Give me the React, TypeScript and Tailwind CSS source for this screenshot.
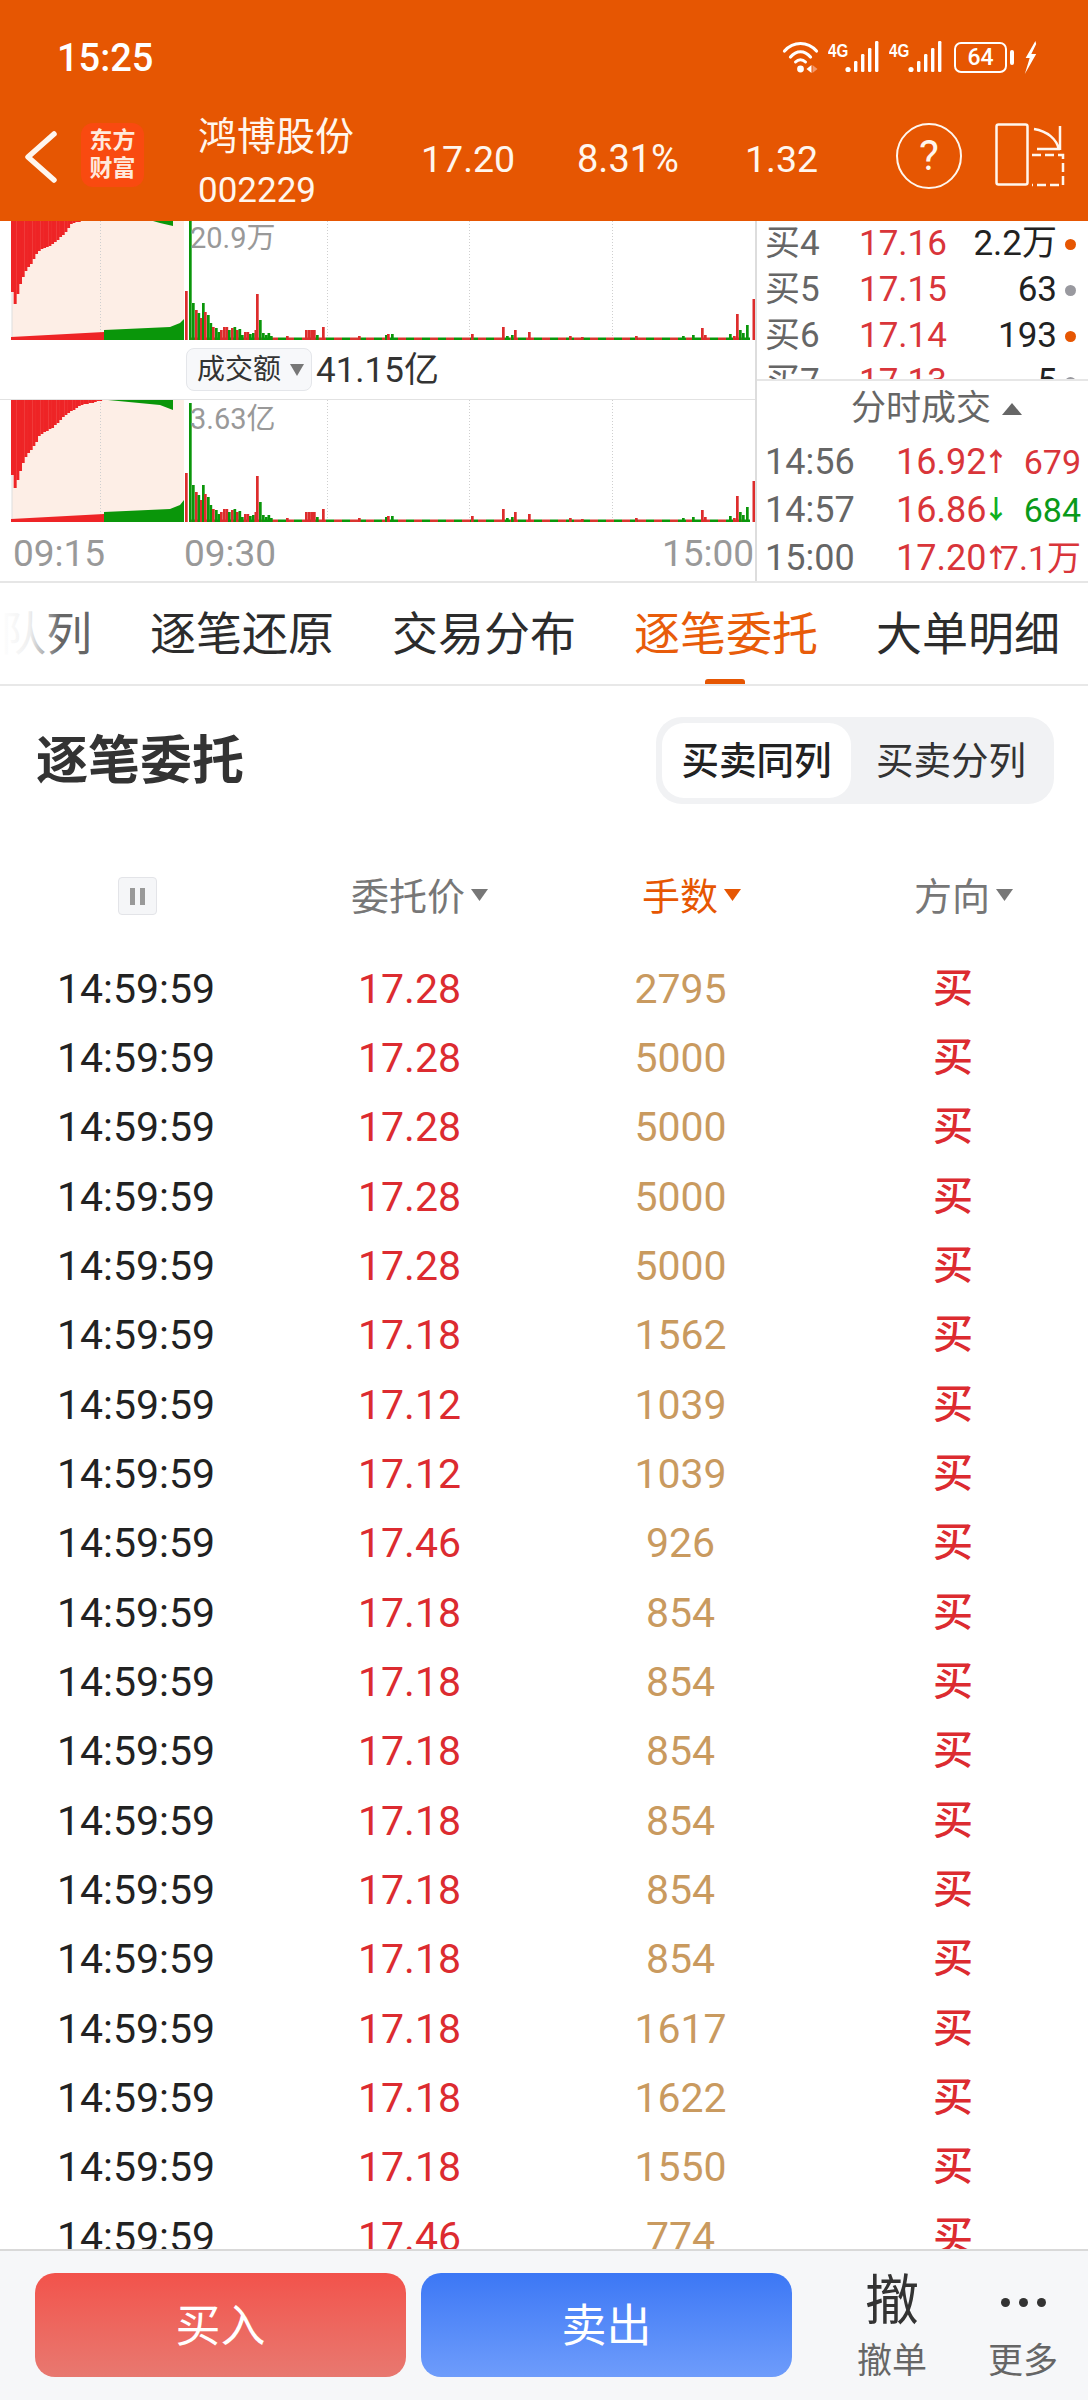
import React from "react";

const FONT = 'Roboto, "Noto Sans CJK SC", sans-serif';
const R = "#ee2426";
const G = "#0a960a";

const rows: [string, string][] = [
  ["17.28", "2795"], ["17.28", "5000"], ["17.28", "5000"], ["17.28", "5000"], ["17.28", "5000"],
  ["17.18", "1562"], ["17.12", "1039"], ["17.12", "1039"], ["17.46", "926"], ["17.18", "854"],
  ["17.18", "854"], ["17.18", "854"], ["17.18", "854"], ["17.18", "854"], ["17.18", "854"],
  ["17.18", "1617"], ["17.18", "1622"], ["17.18", "1550"], ["17.46", "774"],
];

const bars: [number, number, number][] = [
  [185, 49, 1], [189, 119, 0], [192, 37, 0], [195, 30, 1], [197.5, 27, 0], [200, 22, 1], [202, 37, 0],
  [204, 28, 1], [207, 25, 0], [209.5, 17, 0], [212, 13, 1], [215, 12, 0], [217.5, 8, 0], [220, 10, 1],
  [223, 13, 1], [225.5, 13, 1], [228, 10, 0], [231, 12, 1], [233.5, 13, 0], [236, 10, 1], [238.5, 11, 0],
  [241, 5, 0], [244, 8, 1], [246.5, 8, 1], [249, 6, 0], [252, 7, 0], [254.5, 10, 1], [256, 46, 1],
  [259, 20, 0], [262, 7, 0], [265, 5, 0], [267.5, 7, 0], [270, 4, 0], [286, 4, 1], [305, 10, 1], [308, 10, 1],
  [310.5, 10, 1], [313, 10, 1], [316, 5, 0], [322, 13, 1], [358, 4, 1], [385, 5, 0], [387, 6, 1], [391, 6, 0],
  [471, 6, 1], [502, 13, 1], [506, 4, 0], [511, 5, 0], [514, 10, 1], [528, 8, 1], [569, 4, 1], [581, 3, 1],
  [635, 4, 1], [682, 4, 0], [692, 5, 0], [701, 12, 1], [704, 5, 1], [729, 6, 0], [733, 4, 1], [736, 26, 1],
  [739, 10, 0], [742, 7, 0], [746, 15, 0], [752.5, 41, 1],
];

// red block's lower edge, sampled into thin columns so it steps like the reference
function columns(pts: [number, number][]) {
  const out: [number, number][] = [];
  const end = pts[pts.length - 1][0];
  for (let x = 11; x < end; x += 2.67) {
    let y = 0;
    for (let i = 0; i < pts.length - 1; i++) {
      if (x >= pts[i][0] && x < pts[i + 1][0]) {
        const t = (x - pts[i][0]) / (pts[i + 1][0] - pts[i][0]);
        y = pts[i][1] + (pts[i + 1][1] - pts[i][1]) * t;
      }
    }
    out.push([x, Math.round(y)]);
  }
  return out;
}

function Chart({ h, red, greenTop, redBase, greenBase }: { h: number; red: [number, number][]; greenTop: string; redBase: string; greenBase: string }) {
  const noise = Array.from({ length: 70 }, (_, i) => i);
  return (
    <svg width="755" height={h} viewBox={`0 0 755 ${h}`} className="block">
      <rect x="12" y="0" width="172" height={h} fill="#fdeee6" />
      <line x1="12" y1="0" x2="12" y2={h} stroke="#dddddd" strokeWidth="1" />
      {[100, 327, 469, 612].map((x) => (
        <line key={x} x1={x + 0.5} y1="0" x2={x + 0.5} y2={h} stroke="#cfcfcf" strokeWidth="1" strokeDasharray="1 2" />
      ))}
      {columns(red).map(([x, y]) => (
        <rect key={x} x={x} y="0" width="3" height={y} fill={R} />
      ))}
      <polygon points={greenTop} fill={G} />
      <polygon points={redBase} fill={R} />
      <polygon points={greenBase} fill={G} />
      {noise.map((i) => (
        <rect key={i} x={190 + i * 8} y={h - 2.5} width="8" height="2.5" fill={i % 2 ? G : "#d8362f"} />
      ))}
      {bars.map(([x, v, c], i) => (
        <rect key={i} x={x} y={Math.max(h - v, 0)} width="2.7" height={Math.min(v, h)} fill={c ? "#dd2c2c" : G} />
      ))}
    </svg>
  );
}

const Tri = ({ color, up, w = 17, hh = 12 }: { color: string; up?: boolean; w?: number; hh?: number }) => (
  <svg width={w} height={hh} viewBox="0 0 17 12" preserveAspectRatio="none" className="block">
    <polygon points={up ? "8.5,0 17,12 0,12" : "0,0 17,0 8.5,12"} fill={color} />
  </svg>
);

function Signal({ w }: { w: number }) {
  return (
    <div className="flex items-start">
      <span className="block text-[19px] leading-[18px] font-bold text-white mt-[1px] [font-family:'Liberation_Sans',sans-serif] origin-left scale-x-[0.8]" style={{ width: w }}>4G</span>
      <svg width="34" height="32" viewBox="0 0 34 32" className="block">
        <circle cx="3" cy="28.5" r="2.6" fill="#fff" />
        <rect x="9" y="20" width="3.4" height="11" rx="1.2" fill="#fff" />
        <rect x="16" y="13" width="3.4" height="18" rx="1.2" fill="#fff" />
        <rect x="23" y="7" width="3.4" height="24" rx="1.2" fill="#fff" />
        <rect x="30" y="0" width="3.4" height="31" rx="1.2" fill="#fff" />
      </svg>
    </div>
  );
}

function Book({ n, p, v, hot }: { n: string; p: string; v: string; hot: boolean }) {
  return (
    <div className="h-[46px] flex items-center text-[35px] leading-[46px] shrink-0 whitespace-nowrap">
      <span className="w-[102px] pl-[8px] text-[#666666]">{n}</span>
      <span className="w-[90px] text-[#d9353a]">{p}</span>
      <span className="w-[108px] text-right text-[#222222]">{v}</span>
      <span className="w-[8px]" />
      <span className={`w-[11px] h-[11px] rounded-full ${hot ? "bg-[#e65602]" : "bg-[#99999f]"}`} />
    </div>
  );
}

function Tick({ t, p, a, v, up }: { t: string; p: string; a: string; v: string; up: boolean }) {
  return (
    <div className="h-[48.5px] flex items-center text-[36px] leading-[48px] whitespace-nowrap">
      <span className="w-[139px] pl-[8px] text-[#666666]">{t}</span>
      <span className="w-[87px] text-[#d9353a]">{p}</span>
      <span className={`w-[15px] text-center text-[26px] font-bold ${up ? "text-[#d9353a]" : "text-[#0fb01f]"}`}>{a}</span>
      <span className={`w-[83px] text-right text-[34px] ${up ? "text-[#d9353a]" : "text-[#0a9a1a]"}`}>{v}</span>
    </div>
  );
}

export default function App() {
  return (
    <div className="w-[1088px] h-[2400px] bg-white flex flex-col overflow-hidden" style={{ fontFamily: FONT }}>
      {/* header */}
      <div className="h-[221px] shrink-0 bg-[#e65602] text-[#fff6ee] flex flex-col">
        <div className="h-[110px] flex items-start pt-[36px] pl-[57px] pr-[51px] justify-between">
          <span className="text-[38px] leading-[44px] font-medium text-white">15:25</span>
          <div className="flex items-start mt-[5px]">
            <svg width="37" height="32" viewBox="0 0 36 32" className="block">
              <path d="M2 10 C11 0 25 0 34 10" stroke="#fff" strokeWidth="3.2" fill="none" strokeLinecap="round" />
              <path d="M8 16 C14 9 22 9 28 16" stroke="#fff" strokeWidth="3.2" fill="none" strokeLinecap="round" />
              <path d="M13 21 C16 18 20 18 23 21" stroke="#fff" strokeWidth="3" fill="none" strokeLinecap="round" />
              <circle cx="18" cy="28" r="3.4" fill="#fff" />
              <polygon points="29,24 24,28 29,32" fill="#fff" />
              <polygon points="30,24 35,28 30,32" fill="#f3966a" />
            </svg>
            <div className="ml-[9px]"><Signal w={17} /></div>
            <div className="ml-[10px]"><Signal w={19} /></div>
            <div className="ml-[12px] mt-[1px] w-[53px] h-[31px] border-[2.5px] border-white rounded-[7px] flex items-center justify-center text-[23px] leading-[24px] font-medium text-white">64</div>
            <div className="w-[4px] h-[15px] ml-[3px] mt-[9px] bg-white rounded-[2px]" />
            <svg width="13" height="33" viewBox="0 0 16 33" preserveAspectRatio="none" className="block ml-[10px]">
              <polygon points="14,0 2,17 7,17 1,33 15,13 9,13 15,3" fill="#fff" />
            </svg>
          </div>
        </div>
        <div className="flex-1 flex items-start">
          <svg width="81" height="80" viewBox="0 0 81 80" className="block shrink-0 mt-[2px]">
            <path d="M54 22 L28 45 L54 68" stroke="#fff6ee" strokeWidth="5.5" fill="none" strokeLinecap="round" strokeLinejoin="round" />
          </svg>
          <div className="w-[63px] h-[64px] shrink-0 mt-[13px] rounded-[12px] bg-[#f94a10] flex items-center justify-center text-center text-[23px] leading-[28px] font-bold text-[#ffe9dc]">东方<br />财富</div>
          <div className="w-[223px] ml-[54px] shrink-0 mt-[2px]">
            <div className="text-[39px] leading-[50px]">鸿博股份</div>
            <div className="text-[35px] leading-[42px] mt-[8px]">002229</div>
          </div>
          <div className="w-[156px] text-[37.5px] leading-[44px] mt-[27px] shrink-0">17.20</div>
          <div className="w-[168px] text-[38px] leading-[44px] mt-[27px] shrink-0">8.31%</div>
          <div className="w-[151px] text-[37.5px] leading-[44px] mt-[27px] shrink-0">1.32</div>
          <div className="w-[66px] h-[66px] mt-[13px] shrink-0 rounded-full border-[2.5px] border-[#fff6ee] flex items-center justify-center text-[42px] leading-[50px]">?</div>
          <svg width="70" height="66" viewBox="0 0 70 66" className="block ml-[33px] mt-[13px] shrink-0">
            <rect x="1.5" y="1.5" width="31" height="60" rx="2" stroke="#fff6ee" strokeWidth="2.5" fill="none" />
            <path d="M39 6 C52 8 62 16 64 27 M65 3 V27 M42 26 H65" stroke="#fff6ee" strokeWidth="2.5" fill="none" />
            <path d="M37 32 H68 V62 H37" stroke="#fff6ee" strokeWidth="2.5" fill="none" strokeDasharray="9 4" />
          </svg>
        </div>
      </div>

      {/* chart area */}
      <div className="h-[362px] shrink-0 flex border-b-[2px] border-[#e6e6e6]">
        <div className="w-[755px] shrink-0">
          <div className="relative h-[119px]">
            <Chart
              h={119}
              red={[[11, 71], [13, 85], [16, 74], [20, 60], [24, 50], [30, 43], [33, 37], [37, 30], [50, 24], [63, 13], [70, 3], [80, 0]]}
              greenTop="153,0 173,0 173,5 160,2"
              redBase="11,119 11,116 104,111 104,119"
              greenBase="104,109 170,106 180,102 184,98 184,119 104,119"
            />
            <span className="absolute left-[190px] top-[-1px] text-[29px] leading-[36px] text-[#999999]">20.9万</span>
          </div>
          <div className="h-[60px] flex items-center pl-[186px] border-b border-[#e2e2e2]">
            <div className="w-[126px] h-[43px] rounded-[8px] border border-[#e4e6ea] bg-[#f7f8fa] flex items-center pl-[10px] text-[28px] leading-[40px] text-[#333333]">
              <span>成交额</span>
              <svg width="14" height="12" viewBox="0 0 14 12" className="block ml-[9px]"><polygon points="0,0 14,0 7,12" fill="#777777" /></svg>
            </div>
            <span className="ml-[4px] mt-[3px] text-[35px] leading-[44px] text-[#333333]">41.15亿</span>
          </div>
          <div className="relative h-[122px]">
            <Chart
              h={122}
              red={[[11, 75], [13, 90], [17, 78], [21, 65], [24, 57], [28, 52], [35, 42], [38, 35], [52, 27], [65, 14], [80, 5], [103, 0]]}
              greenTop="108,0 173,0 173,10 160,5"
              redBase="11,122 11,119 104,114 104,122"
              greenBase="104,112 170,109 180,105 184,100 184,122 104,122"
            />
            <span className="absolute left-[190px] top-[1px] text-[29px] leading-[36px] text-[#999999]">3.63亿</span>
          </div>
          <div className="flex h-[59px] items-center pt-[5px] text-[37px] leading-[44px] text-[#999999] pl-[13px]">
            <span className="w-[171px]">09:15</span>
            <span className="w-[478px]">09:30</span>
            <span>15:00</span>
          </div>
        </div>
        <div className="w-[333px] border-l-[2px] border-[#dddddd] flex flex-col">
          <div className="h-[160px] overflow-hidden border-b-[2px] border-[#e6e6e6] shrink-0 flex flex-col">
            <Book n="买4" p="17.16" v="2.2万" hot />
            <Book n="买5" p="17.15" v="63" hot={false} />
            <Book n="买6" p="17.14" v="193" hot />
            <Book n="买7" p="17.13" v="5" hot={false} />
          </div>
          <div className="h-[55px] flex items-center justify-center gap-[11px] text-[35px] leading-[44px] text-[#666666] pl-[28px] shrink-0">
            <span>分时成交</span>
            <Tri color="#666666" up w={20} hh={12} />
          </div>
          <div className="mt-[2px]" />
          <Tick t="14:56" p="16.92" a="↑" v="679" up />
          <Tick t="14:57" p="16.86" a="↓" v="684" up={false} />
          <Tick t="15:00" p="17.20" a="↑" v="7.1万" up />
        </div>
      </div>

      {/* tabs */}
      <div className="h-[103px] shrink-0 relative border-b-[2px] border-[#e8e8e8] overflow-hidden flex gap-[58px] pt-[21px] text-[46px] leading-[60px] text-[#2c2c2c]">
        <span className="text-[#666666]">队列</span>
        <span>逐笔还原</span>
        <span>交易分布</span>
        <span className="text-[#e85c0a] relative">
          逐笔委托
          <span className="absolute left-[71px] top-[75px] w-[40px] h-[7px] rounded-[3px] bg-[#e65602]" />
        </span>
        <span>大单明细</span>
        <div className="absolute left-0 top-0 h-full w-[60px] bg-gradient-to-r from-white via-white/90 to-transparent" />
      </div>

      {/* section title */}
      <div className="h-[176px] shrink-0 flex items-start justify-between pl-[36px] pr-[34px] pt-[31px]">
        <span className="text-[52px] leading-[90px] font-bold text-[#333333]">逐笔委托</span>
        <div className="w-[398px] h-[87px] rounded-[26px] bg-[#f1f2f4] flex items-center pl-[6px] text-[37.5px] leading-[50px] text-[#333333]">
          <div className="w-[189px] h-[75px] rounded-[22px] bg-white flex items-center justify-center font-medium text-[#222222]">买卖同列</div>
          <div className="w-[197px] flex items-center justify-center pl-[3px]">买卖分列</div>
        </div>
      </div>

      {/* table */}
      <div className="flex-1 overflow-hidden min-h-0">
        <div className="grid grid-cols-4 h-[92px] items-start pt-[10px] text-[38px] leading-[50px] text-[#777777]">
          <div className="flex justify-center pl-[2px] pt-[5px]">
            <div className="w-[39px] h-[38px] rounded-[4px] border border-[#e3e4e8] bg-[#f5f6f8] flex items-center justify-center gap-[5px]">
              <span className="w-[5px] h-[17px] bg-[#999999]" />
              <span className="w-[5px] h-[17px] bg-[#999999]" />
            </div>
          </div>
          {[
            ["委托价", "#777777"],
            ["手数", "#e65602"],
            ["方向", "#777777"],
          ].map(([t, c]) => (
            <div key={t} className="flex justify-center">
              <span className="relative" style={{ color: c }}>
                {t}
                <span className="absolute left-full top-[17px] ml-[6px]"><Tri color={c} /></span>
              </span>
            </div>
          ))}
        </div>
        {rows.map(([p, q], i) => (
          <div key={i} className="grid grid-cols-4 h-[69.33px] items-center text-center text-[41px] leading-[60px]">
            <span className="text-[#222222]">14:59:59</span>
            <span className="text-[#dc2b30] pl-[3px]">{p}</span>
            <span className="text-[#c99a5f] pl-[1px]">{q}</span>
            <span className="text-[#dc2b30] text-[40px] font-medium pl-[2px]">买</span>
          </div>
        ))}
      </div>

      {/* footer */}
      <div className="h-[151px] shrink-0 bg-[#f6f7f9] border-t-[2px] border-[#d9d9d9] flex items-start pt-[22px] pl-[35px]">
        <div className="w-[371px] h-[104px] rounded-[20px] pt-[4px] bg-gradient-to-b from-[#f2524b] to-[#e87870] flex items-center justify-center text-[45px] leading-[60px] text-white">买入</div>
        <div className="w-[371px] h-[104px] ml-[15px] rounded-[20px] pt-[4px] bg-gradient-to-b from-[#3c77f5] to-[#6e9cfb] flex items-center justify-center text-[45px] leading-[60px] text-white">卖出</div>
        <div className="ml-[63px] w-[74px] flex flex-col items-center">
          <span className="text-[54px] leading-[58px] text-[#333333]">撤</span>
          <span className="text-[35px] leading-[44px] text-[#666666] mt-[9px]">撤单</span>
        </div>
        <div className="ml-[58px] w-[72px] flex flex-col items-center">
          <div className="h-[58px] flex items-center gap-[9px]">
            <span className="w-[9px] h-[9px] rounded-full bg-[#333333]" />
            <span className="w-[9px] h-[9px] rounded-full bg-[#333333]" />
            <span className="w-[9px] h-[9px] rounded-full bg-[#333333]" />
          </div>
          <span className="text-[35px] leading-[44px] text-[#666666] mt-[9px]">更多</span>
        </div>
      </div>
    </div>
  );
}
